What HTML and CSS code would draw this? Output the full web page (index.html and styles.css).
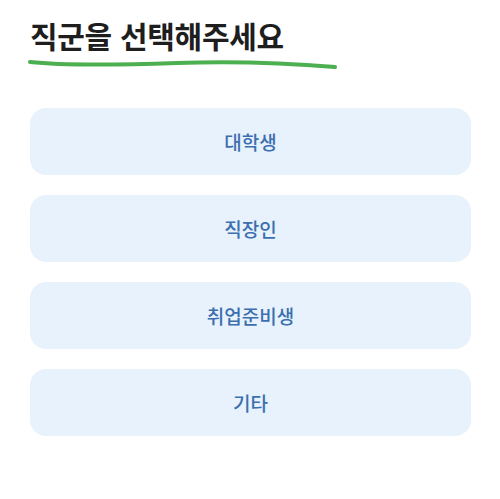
FILE: index.html
```html
<!DOCTYPE html>
<html lang="ko">
<head>
<meta charset="utf-8">
<link rel="stylesheet" href="styles.css">
</head>
<body>
<main class="page">
  <header class="heading">
    <h1 class="title">직군을 선택해주세요</h1>
    <svg class="underline" width="312" height="14" viewBox="0 0 312 14">
      <path d="M3 5 C 40 9, 90 8, 150 6 S 260 6, 308 10" fill="none" stroke="#4caf50" stroke-width="4" stroke-linecap="round"/>
    </svg>
  </header>
  <div class="options">
    <button class="option">대학생</button>
    <button class="option">직장인</button>
    <button class="option">취업준비생</button>
    <button class="option">기타</button>
  </div>
</main>
</body>
</html>
```
FILE: styles.css
```css
html, body {
  margin: 0;
  padding: 0;
  background: #ffffff;
  font-family: "Noto Sans CJK KR", "Noto Sans", sans-serif;
}
.page {
  padding: 14px 29px 0 30px;
}
.heading {
  display: flex;
  flex-direction: column;
}
.title {
  margin: 0;
  font-size: 30px;
  font-weight: 700;
  color: #1e1e1e;
  line-height: 42px;
  letter-spacing: -0.3px;
}
.underline {
  display: block;
  margin-left: -3px;
  margin-top: 1px;
}
.options {
  display: flex;
  flex-direction: column;
  gap: 20px;
  margin-top: 37px;
}
.option {
  height: 67px;
  border: none;
  border-radius: 16px;
  background: #e8f2fd;
  color: #3b6fae;
  font-family: inherit;
  font-size: 19px;
  font-weight: 500;
  padding: 0;
}
```
